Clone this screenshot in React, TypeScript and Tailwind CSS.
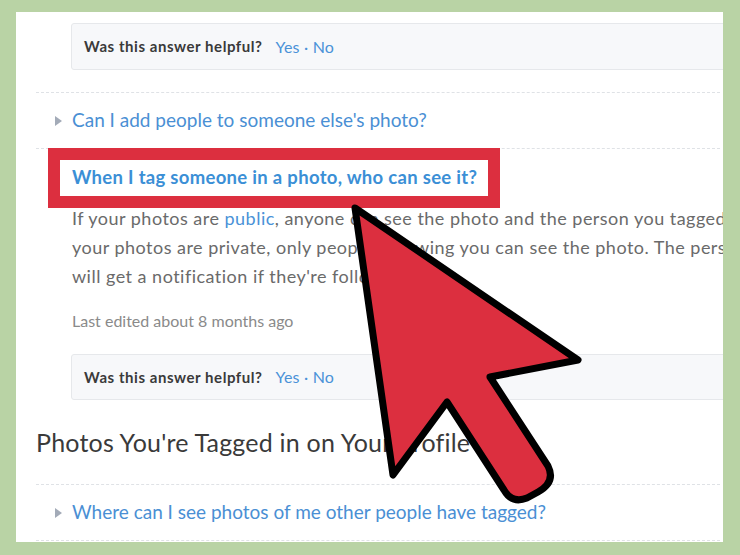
const Triangle = () => (
  <svg width="7" height="10" viewBox="0 0 7 10" className="shrink-0">
    <path d="M0 0 L7 5 L0 10 Z" fill="#a3abb8" />
  </svg>
);

const Feedback = ({ className }: { className: string }) => (
  <div
    className={`ml-[35px] w-[700px] bg-[#f7f8fa] border border-[#e6e8eb] rounded-[3px] flex items-center pl-[12px] gap-[13px] ${className}`}
  >
    <span className="font-bold text-[15px] tracking-[0.55px] text-[#3a3a3a]">Was this answer helpful?</span>
    <span className="text-[16px] tracking-[0.2px] text-[#4a92d8]">Yes · No</span>
  </div>
);

const Question = ({ text }: { text: string }) => (
  <div className="border-t border-dashed border-[#dfe2e6] w-[684px] h-[56px] flex items-center pl-[19px] gap-[10px]">
    <Triangle />
    <span className="text-[19px] text-[#4a8fd4] whitespace-nowrap">{text}</span>
  </div>
);

export default function App() {
  return (
    <div
      className="relative w-[740px] h-[555px] bg-[#b9d3a5] pt-3 pl-4 overflow-hidden"
      style={{ fontFamily: "Lato, 'Open Sans', sans-serif" }}
    >
      <div className="w-[707px] h-[530px] bg-white overflow-hidden pl-5">
        <Feedback className="mt-[11px] h-[47px]" />
        <div className="mt-[22px]">
          <Question text="Can I add people to someone else's photo?" />
        </div>
        <div className="border-t border-dashed border-[#dfe2e6] w-[684px]">
          <div className="-mt-px ml-3 w-[452px] h-[60px] border-[12px] border-[#dc2f3f] bg-white flex items-center pl-3">
            <span className="font-bold text-[18.5px] tracking-[0.3px] text-[#3b8fd6] whitespace-nowrap">
              When I tag someone in a photo, who can see it?
            </span>
          </div>
          <div className="-mt-1 pl-[36px] text-[18px] tracking-[0.48px] leading-[29px] text-[#6a6a6a] whitespace-nowrap">
            <p>
              If your photos are <span className="text-[#4a92d8]">public</span>, anyone can see the photo and the
              person you tagged in it. If
            </p>
            <p>your photos are private, only people following you can see the photo. The person you tagged</p>
            <p>will get a notification if they're following you.</p>
          </div>
          <p className="mt-5 pl-[36px] text-[16px] leading-5 text-[#8a8a8a]">Last edited about 8 months ago</p>
        </div>
        <Feedback className="mt-[23px] h-[46px]" />
        <h2 className="mt-[26px] text-[25px] tracking-[0.2px] leading-8 text-[#3a3a3a] whitespace-nowrap">
          Photos You're Tagged in on Your Profile
        </h2>
        <div className="mt-[26px]">
          <Question text="Where can I see photos of me other people have tagged?" />
        </div>
        <div className="border-t border-dashed border-[#dfe2e6] w-[684px]" />
      </div>

      <svg className="absolute left-0 top-0" width="740" height="555" viewBox="0 0 740 555">
        <path
          d="M355 208 L578 360 L490 377 L548 466 Q556 482 538 492 L527 498 Q512 504 504 490 L447 402 L393 475 Z"
          fill="#dc2f3f"
          stroke="#000"
          strokeWidth="7"
          strokeLinejoin="round"
        />
      </svg>
    </div>
  );
}
